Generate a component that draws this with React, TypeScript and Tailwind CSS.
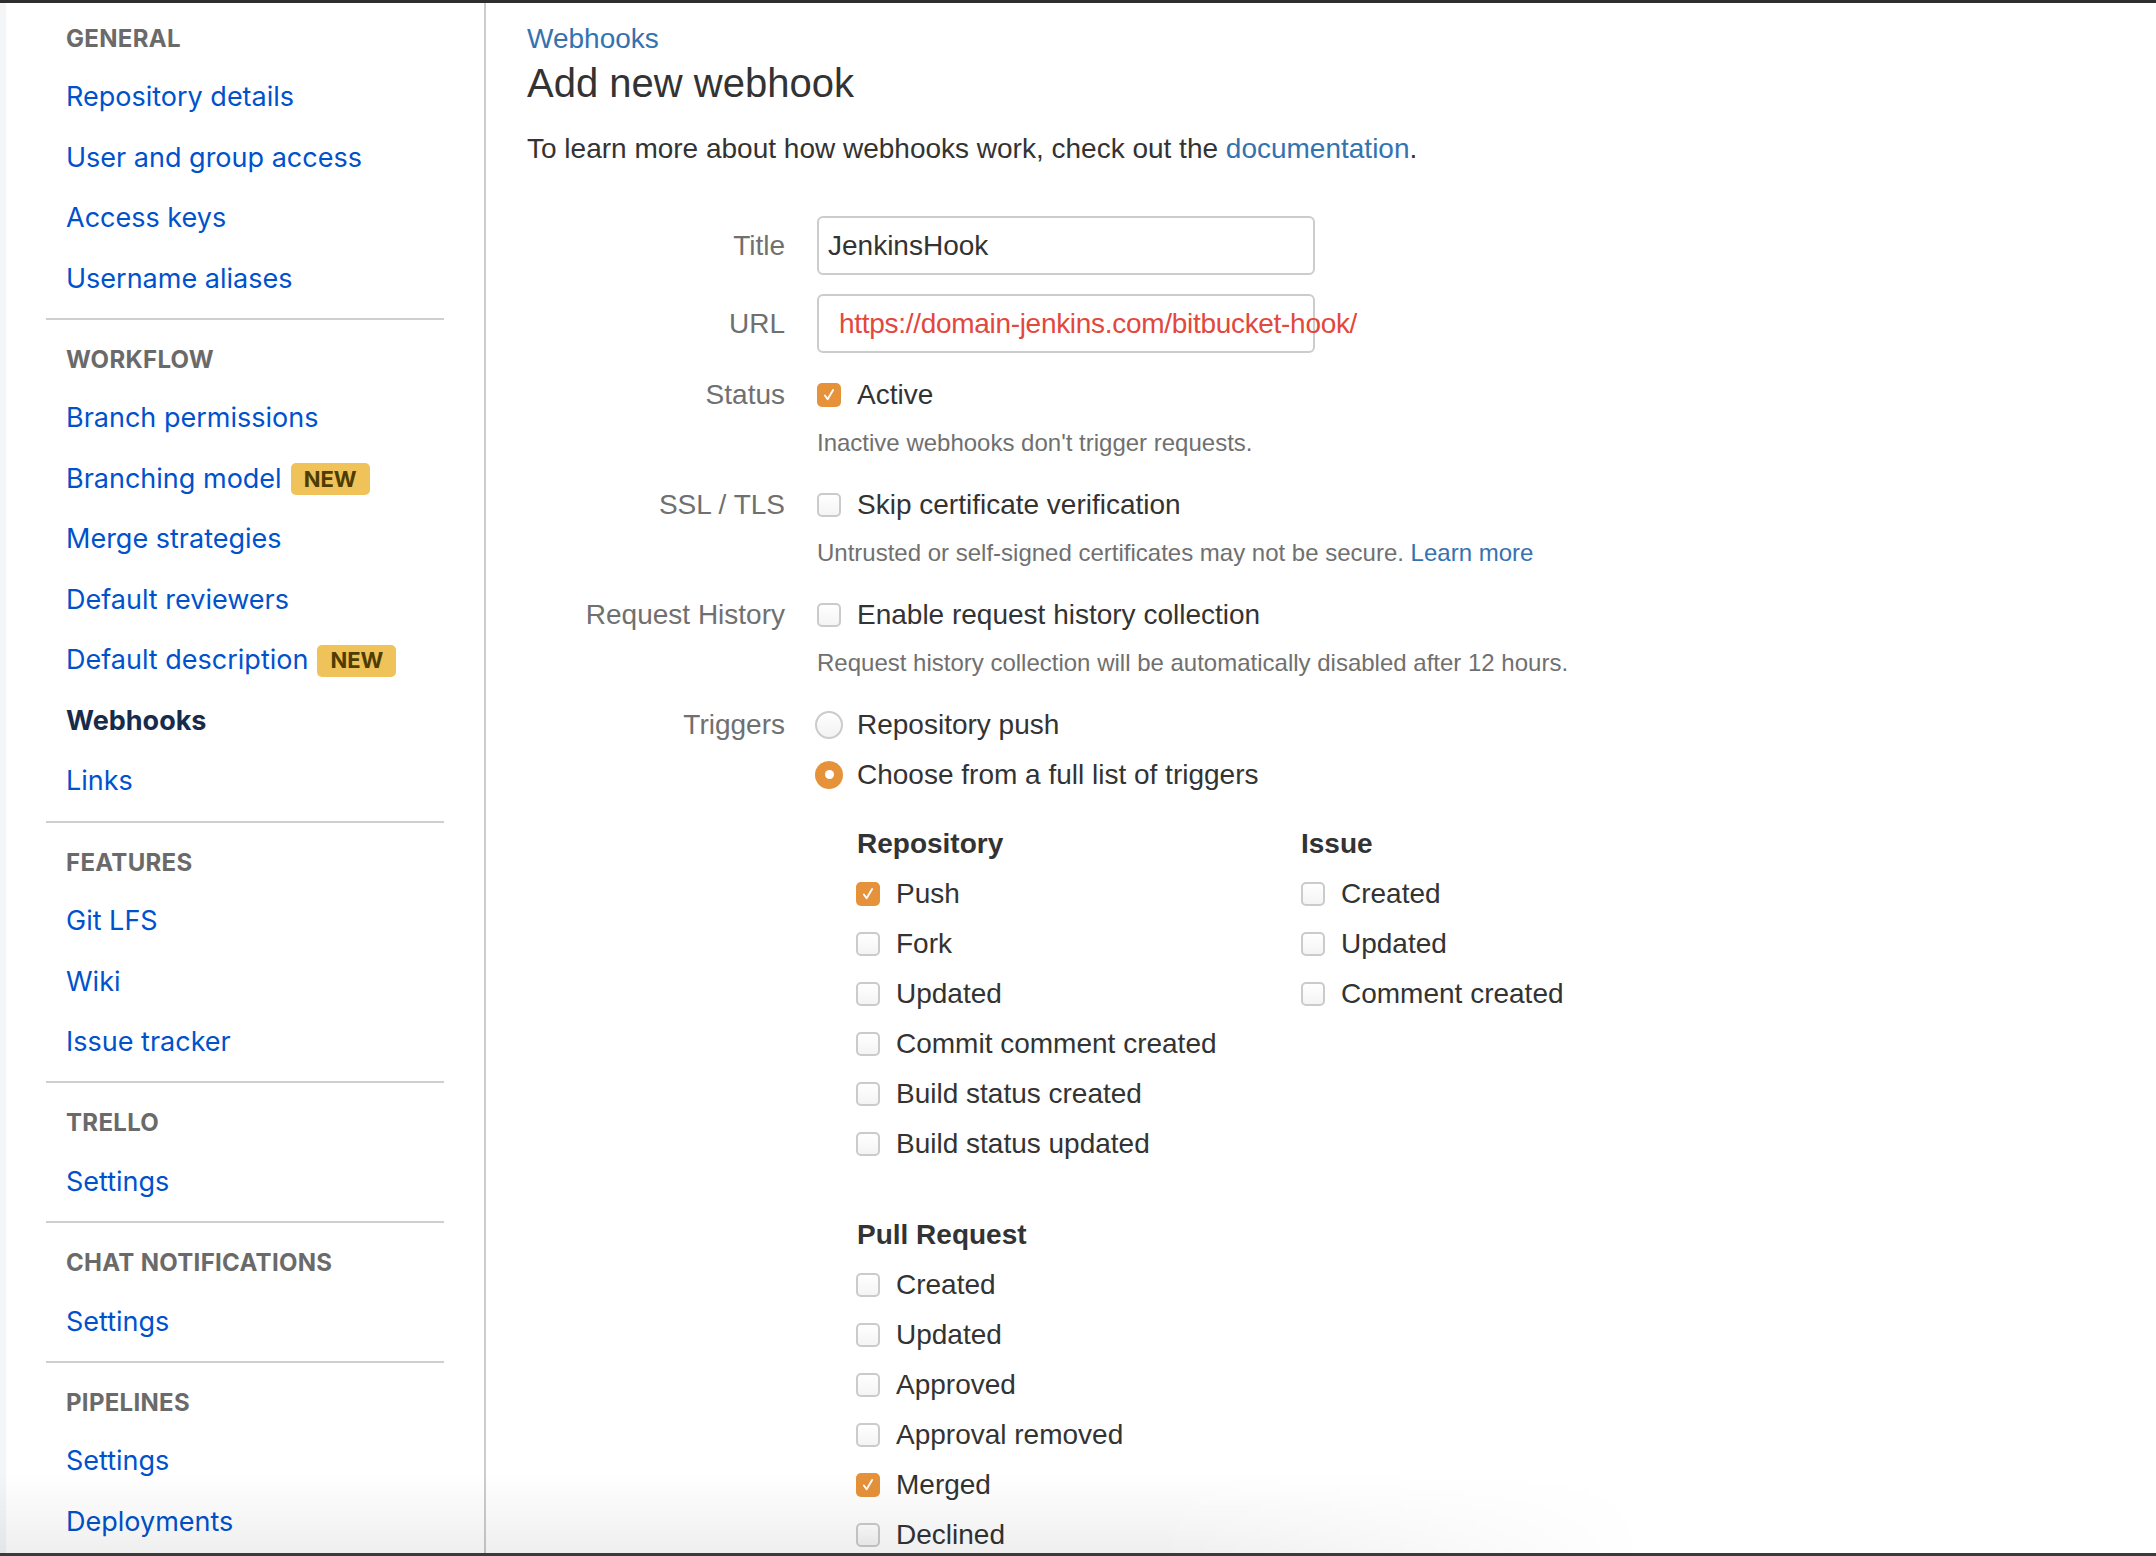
import React from 'react';

type NavLink = { label: string; badge?: boolean; active?: boolean };
type NavSection = { title: string; links: NavLink[] };

const sections: NavSection[] = [
  {
    title: 'GENERAL',
    links: [
      { label: 'Repository details' },
      { label: 'User and group access' },
      { label: 'Access keys' },
      { label: 'Username aliases' },
    ],
  },
  {
    title: 'WORKFLOW',
    links: [
      { label: 'Branch permissions' },
      { label: 'Branching model', badge: true },
      { label: 'Merge strategies' },
      { label: 'Default reviewers' },
      { label: 'Default description', badge: true },
      { label: 'Webhooks', active: true },
      { label: 'Links' },
    ],
  },
  {
    title: 'FEATURES',
    links: [{ label: 'Git LFS' }, { label: 'Wiki' }, { label: 'Issue tracker' }],
  },
  { title: 'TRELLO', links: [{ label: 'Settings' }] },
  { title: 'CHAT NOTIFICATIONS', links: [{ label: 'Settings' }] },
  { title: 'PIPELINES', links: [{ label: 'Settings' }, { label: 'Deployments' }] },
];

const repoTriggers = [
  { label: 'Push', checked: true },
  { label: 'Fork' },
  { label: 'Updated' },
  { label: 'Commit comment created' },
  { label: 'Build status created' },
  { label: 'Build status updated' },
];

const issueTriggers = [{ label: 'Created' }, { label: 'Updated' }, { label: 'Comment created' }];

const prTriggers = [
  { label: 'Created' },
  { label: 'Updated' },
  { label: 'Approved' },
  { label: 'Approval removed' },
  { label: 'Merged', checked: true },
  { label: 'Declined' },
];

function CheckBox({ checked }: { checked?: boolean }) {
  if (checked) {
    return (
      <span className="flex h-[24px] w-[24px] shrink-0 items-center justify-center rounded-[5px] bg-[#e5923a]">
        <svg viewBox="0 0 24 24" className="h-[22px] w-[22px]">
          <path d="M7.5 12.5l3 4.2L16.5 6.5" fill="none" stroke="white" strokeWidth="2" strokeLinecap="round" strokeLinejoin="round" />
        </svg>
      </span>
    );
  }
  return <span className="h-[24px] w-[24px] shrink-0 rounded-[5px] border-2 border-[#cbcbcb] bg-gradient-to-b from-white to-[#f4f4f4]" />;
}

function Radio({ checked }: { checked?: boolean }) {
  if (checked) {
    return (
      <span className="-ml-[2px] flex h-[28px] w-[28px] shrink-0 items-center justify-center rounded-full bg-[#e5923a]">
        <span className="h-[9px] w-[9px] rounded-full bg-white" />
      </span>
    );
  }
  return <span className="-ml-[2px] h-[28px] w-[28px] shrink-0 rounded-full border-2 border-[#cbcbcb] bg-gradient-to-b from-white to-[#f2f2f2]" />;
}

function Sidebar() {
  return (
    <aside className="flex w-[480px] shrink-0 flex-col border-r-2 border-[#cccccc] bg-white px-[40px] font-['Inter',sans-serif]">
      {sections.map((section, i) => (
        <div
          key={section.title}
          className={i === 0 ? 'pt-[15.5px] pb-[8.75px]' : 'border-t-2 border-[#cfcfcf] pt-[20px] pb-[8.75px]'}
        >
          <div className="mb-[8.5px] flex h-[40px] items-center pl-[20px] text-[24px] font-bold tracking-[0.3px] text-[#6a6a6a]">
            {section.title}
          </div>
          {section.links.map(link => (
            <div key={link.label} className="flex h-[60.5px] items-center gap-[9px] pl-[20px]">
              <span
                className={
                  link.active
                    ? 'text-[27px] font-bold text-[#172b4d]'
                    : 'text-[27px] text-[#0052cc]'
                }
              >
                {link.label}
              </span>
              {link.badge && (
                <span className="flex h-[32px] items-center rounded-[5px] bg-[#f0c35a] px-[13px] text-[22px] font-bold text-[#4d3d00]">
                  NEW
                </span>
              )}
            </div>
          ))}
        </div>
      ))}
    </aside>
  );
}

function FieldLabel({ children, h }: { children: React.ReactNode; h: string }) {
  return (
    <div className={`flex w-[258px] shrink-0 items-center justify-end text-[28px] text-[#707070] ${h}`}>
      {children}
    </div>
  );
}

function TriggerRow({ label, checked }: { label: string; checked?: boolean }) {
  return (
    <div className="flex h-[50px] items-center gap-[16px]">
      <CheckBox checked={checked} />
      <span className="text-[28px] text-[#333333]">{label}</span>
    </div>
  );
}

function WebhookForm() {
  return (
    <main className="flex-1 pl-[41px] pt-[15.5px] font-['Liberation_Sans',Arial,sans-serif] text-[#333333]">
      <div className="flex h-[40px] items-center text-[28px] text-[#3572b0]">Webhooks</div>
      <h1 className="flex h-[48px] items-center text-[40px] text-[#333333]">Add new webhook</h1>
      <p className="mt-[22px] flex h-[40px] items-center text-[28px]">
        To learn more about how webhooks work, check out the&nbsp;
        <span className="text-[#3572b0]">documentation</span>.
      </p>

      <div className="mt-[47.5px]">
        <div className="flex gap-[32px]">
          <FieldLabel h="h-[59px]">Title</FieldLabel>
          <div className="flex h-[59px] w-[498px] items-center rounded-[6px] border-2 border-[#cccccc] px-[9px] text-[28px] text-[#333333]">
            JenkinsHook
          </div>
        </div>

        <div className="mt-[19px] flex gap-[32px]">
          <FieldLabel h="h-[59px]">URL</FieldLabel>
          <div className="flex h-[59px] w-[498px] items-center overflow-visible whitespace-nowrap rounded-[6px] border-2 border-[#cccccc] px-[20px] text-[28px] tracking-[-0.3px] text-[#e2483d]">
            https://domain-jenkins.com/bitbucket-hook/
          </div>
        </div>

        <div className="mt-[21.6px] flex gap-[32px]">
          <FieldLabel h="h-[40px]">Status</FieldLabel>
          <div>
            <div className="flex h-[40px] items-center gap-[16px]">
              <CheckBox checked />
              <span className="text-[28px]">Active</span>
            </div>
            <div className="mt-[11.5px] flex h-[34px] items-center text-[24px] text-[#707070]">
              Inactive webhooks don't trigger requests.
            </div>
          </div>
        </div>

        <div className="mt-[24.5px] flex gap-[32px]">
          <FieldLabel h="h-[40px]">SSL / TLS</FieldLabel>
          <div>
            <div className="flex h-[40px] items-center gap-[16px]">
              <CheckBox />
              <span className="text-[28px]">Skip certificate verification</span>
            </div>
            <div className="mt-[11.5px] flex h-[34px] items-center text-[24px] text-[#707070]">
              Untrusted or self-signed certificates may not be secure.&nbsp;
              <span className="text-[#3572b0]">Learn more</span>
            </div>
          </div>
        </div>

        <div className="mt-[24.5px] flex gap-[32px]">
          <FieldLabel h="h-[40px]">Request History</FieldLabel>
          <div>
            <div className="flex h-[40px] items-center gap-[16px]">
              <CheckBox />
              <span className="text-[28px]">Enable request history collection</span>
            </div>
            <div className="mt-[11.5px] flex h-[34px] items-center text-[24px] text-[#707070]">
              Request history collection will be automatically disabled after 12 hours.
            </div>
          </div>
        </div>

        <div className="mt-[24.5px] flex gap-[32px]">
          <FieldLabel h="h-[40px]">Triggers</FieldLabel>
          <div>
            <div className="flex h-[40px] items-center gap-[14px]">
              <Radio />
              <span className="text-[28px]">Repository push</span>
            </div>
            <div className="mt-[10px] flex h-[40px] items-center gap-[14px]">
              <Radio checked />
              <span className="text-[28px]">Choose from a full list of triggers</span>
            </div>

            <div className="ml-[39px] mt-[24.4px] grid grid-cols-[445px_auto]">
              <div>
                <div className="flex h-[50px] items-center pl-[1px] text-[28px] font-bold">Repository</div>
                {repoTriggers.map(t => (
                  <TriggerRow key={t.label} label={t.label} checked={t.checked} />
                ))}
                <div className="mt-[40.75px] flex h-[50px] items-center pl-[1px] text-[28px] font-bold">Pull Request</div>
                {prTriggers.map(t => (
                  <TriggerRow key={t.label} label={t.label} checked={t.checked} />
                ))}
              </div>
              <div>
                <div className="flex h-[50px] items-center text-[28px] font-bold">Issue</div>
                {issueTriggers.map(t => (
                  <TriggerRow key={t.label} label={t.label} />
                ))}
              </div>
            </div>
          </div>
        </div>
      </div>
    </main>
  );
}

export default function App() {
  return (
    <div className="relative flex h-[1556px] w-[2156px] flex-col overflow-hidden bg-white">
      <div className="h-[3px] shrink-0 bg-[#2e2e2e]" />
      <div className="flex min-h-0 flex-1 overflow-hidden">
        <div className="w-[6px] shrink-0 bg-[#f4f5f7]" />
        <Sidebar />
        <WebhookForm />
      </div>
      <div className="h-[3px] shrink-0 bg-[#3a3a3a]" />
      <div className="pointer-events-none absolute bottom-[3px] left-0 h-[80px] w-[1650px] bg-gradient-to-t from-[#00000010] to-transparent [mask-image:linear-gradient(to_right,black_70%,transparent)]" />
    </div>
  );
}
